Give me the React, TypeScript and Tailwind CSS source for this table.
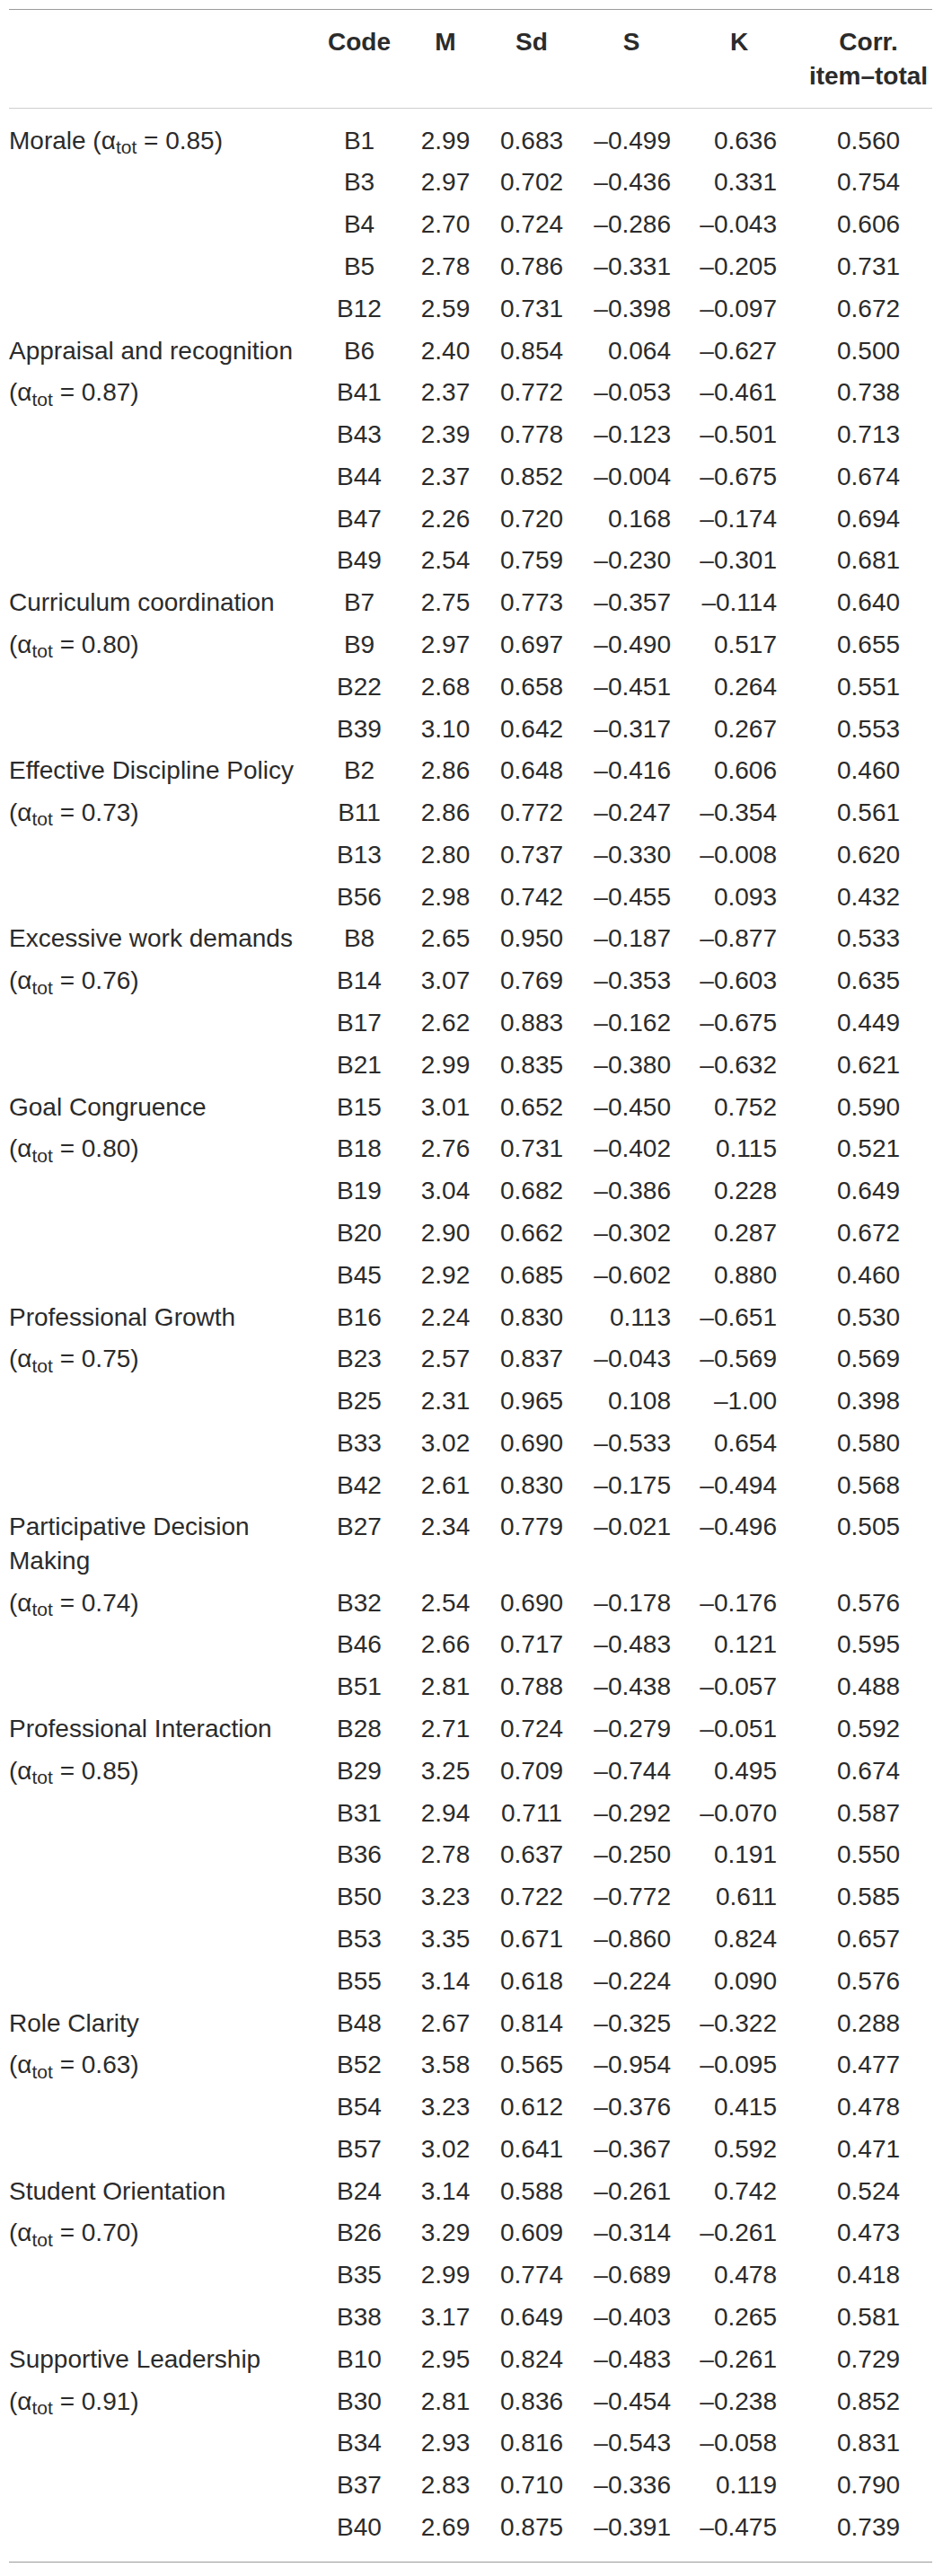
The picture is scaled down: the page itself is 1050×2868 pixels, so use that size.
import React from "react";

type Row = [React.ReactNode, string, string, string, string, string, string, boolean?];

const A = (v: string) => (
  <>
    (α<sub>tot</sub> = {v})
  </>
);

const rows: Row[] = [
  [<>Morale (α<sub>tot</sub> = 0.85)</>, "B1", "2.99", "0.683", "–0.499", "0.636", "0.560"],
  ["", "B3", "2.97", "0.702", "–0.436", "0.331", "0.754"],
  ["", "B4", "2.70", "0.724", "–0.286", "–0.043", "0.606"],
  ["", "B5", "2.78", "0.786", "–0.331", "–0.205", "0.731"],
  ["", "B12", "2.59", "0.731", "–0.398", "–0.097", "0.672"],
  ["Appraisal and recognition", "B6", "2.40", "0.854", "0.064", "–0.627", "0.500"],
  [A("0.87"), "B41", "2.37", "0.772", "–0.053", "–0.461", "0.738"],
  ["", "B43", "2.39", "0.778", "–0.123", "–0.501", "0.713"],
  ["", "B44", "2.37", "0.852", "–0.004", "–0.675", "0.674"],
  ["", "B47", "2.26", "0.720", "0.168", "–0.174", "0.694"],
  ["", "B49", "2.54", "0.759", "–0.230", "–0.301", "0.681"],
  ["Curriculum coordination", "B7", "2.75", "0.773", "–0.357", "–0.114", "0.640"],
  [A("0.80"), "B9", "2.97", "0.697", "–0.490", "0.517", "0.655"],
  ["", "B22", "2.68", "0.658", "–0.451", "0.264", "0.551"],
  ["", "B39", "3.10", "0.642", "–0.317", "0.267", "0.553"],
  ["Effective Discipline Policy", "B2", "2.86", "0.648", "–0.416", "0.606", "0.460"],
  [A("0.73"), "B11", "2.86", "0.772", "–0.247", "–0.354", "0.561"],
  ["", "B13", "2.80", "0.737", "–0.330", "–0.008", "0.620"],
  ["", "B56", "2.98", "0.742", "–0.455", "0.093", "0.432"],
  ["Excessive work demands", "B8", "2.65", "0.950", "–0.187", "–0.877", "0.533"],
  [A("0.76"), "B14", "3.07", "0.769", "–0.353", "–0.603", "0.635"],
  ["", "B17", "2.62", "0.883", "–0.162", "–0.675", "0.449"],
  ["", "B21", "2.99", "0.835", "–0.380", "–0.632", "0.621"],
  ["Goal Congruence", "B15", "3.01", "0.652", "–0.450", "0.752", "0.590"],
  [A("0.80"), "B18", "2.76", "0.731", "–0.402", "0.115", "0.521"],
  ["", "B19", "3.04", "0.682", "–0.386", "0.228", "0.649"],
  ["", "B20", "2.90", "0.662", "–0.302", "0.287", "0.672"],
  ["", "B45", "2.92", "0.685", "–0.602", "0.880", "0.460"],
  ["Professional Growth", "B16", "2.24", "0.830", "0.113", "–0.651", "0.530"],
  [A("0.75"), "B23", "2.57", "0.837", "–0.043", "–0.569", "0.569"],
  ["", "B25", "2.31", "0.965", "0.108", "–1.00", "0.398"],
  ["", "B33", "3.02", "0.690", "–0.533", "0.654", "0.580"],
  ["", "B42", "2.61", "0.830", "–0.175", "–0.494", "0.568"],
  ["Participative Decision Making", "B27", "2.34", "0.779", "–0.021", "–0.496", "0.505"],
  [A("0.74"), "B32", "2.54", "0.690", "–0.178", "–0.176", "0.576"],
  ["", "B46", "2.66", "0.717", "–0.483", "0.121", "0.595"],
  ["", "B51", "2.81", "0.788", "–0.438", "–0.057", "0.488"],
  ["Professional Interaction", "B28", "2.71", "0.724", "–0.279", "–0.051", "0.592"],
  [A("0.85"), "B29", "3.25", "0.709", "–0.744", "0.495", "0.674"],
  ["", "B31", "2.94", "0.711", "–0.292", "–0.070", "0.587"],
  ["", "B36", "2.78", "0.637", "–0.250", "0.191", "0.550"],
  ["", "B50", "3.23", "0.722", "–0.772", "0.611", "0.585"],
  ["", "B53", "3.35", "0.671", "–0.860", "0.824", "0.657"],
  ["", "B55", "3.14", "0.618", "–0.224", "0.090", "0.576"],
  ["Role Clarity", "B48", "2.67", "0.814", "–0.325", "–0.322", "0.288"],
  [A("0.63"), "B52", "3.58", "0.565", "–0.954", "–0.095", "0.477"],
  ["", "B54", "3.23", "0.612", "–0.376", "0.415", "0.478"],
  ["", "B57", "3.02", "0.641", "–0.367", "0.592", "0.471"],
  ["Student Orientation", "B24", "3.14", "0.588", "–0.261", "0.742", "0.524"],
  [A("0.70"), "B26", "3.29", "0.609", "–0.314", "–0.261", "0.473"],
  ["", "B35", "2.99", "0.774", "–0.689", "0.478", "0.418"],
  ["", "B38", "3.17", "0.649", "–0.403", "0.265", "0.581"],
  ["Supportive Leadership", "B10", "2.95", "0.824", "–0.483", "–0.261", "0.729"],
  [A("0.91"), "B30", "2.81", "0.836", "–0.454", "–0.238", "0.852"],
  ["", "B34", "2.93", "0.816", "–0.543", "–0.058", "0.831"],
  ["", "B37", "2.83", "0.710", "–0.336", "0.119", "0.790"],
  ["", "B40", "2.69", "0.875", "–0.391", "–0.475", "0.739"],
];

export default function App() {
  return (
    <div
      className="w-[1050px] bg-white pt-[10px] px-[10px] text-[#2b2b2b]"
      style={{ fontFamily: '"Liberation Sans", Arial, Helvetica, sans-serif' }}
    >
      <table className="w-[1028px] table-fixed border-collapse text-[28px]">
        <colgroup>
          <col className="w-[345px]" />
          <col className="w-[90px]" />
          <col className="w-[102px]" />
          <col className="w-[90px]" />
          <col className="w-[120px]" />
          <col className="w-[118px]" />
          <col className="w-[163px]" />
        </colgroup>
        <thead>
          <tr className="border-t border-b border-t-[#9b9b9b] border-b-[#cfcfcf] align-top font-bold leading-[38px]">
            <th className="p-0 pt-[17px] pb-[16px]"></th>
            <th className="p-0 pt-[17px] pb-[16px] text-center">Code</th>
            <th className="p-0 pt-[17px] pb-[16px] text-center">M</th>
            <th className="p-0 pt-[17px] pb-[16px] text-center">Sd</th>
            <th className="p-0 pt-[17px] pb-[16px] pl-[12px] text-center">S</th>
            <th className="p-0 pt-[17px] pb-[16px] pl-[14px] text-center">K</th>
            <th className="p-0 pt-[17px] pb-[16px] pl-[21px] text-center">
              Corr.
              <br />
              item–total
            </th>
          </tr>
        </thead>
        <tbody className="border-b border-b-[#9b9b9b]">
          <tr>
            <td colSpan={7} className="h-[12.5px] p-0"></td>
          </tr>
          {rows.map((r, i) => (
            <tr key={i} className="align-top leading-[37.5px]">
              <td className="p-0 py-[4.65px] text-left">{r[0]}</td>
              <td className="p-0 py-[4.65px] text-center whitespace-nowrap">{r[1]}</td>
              <td className="p-0 py-[4.65px] text-center whitespace-nowrap">{r[2]}</td>
              <td className="p-0 py-[4.65px] text-center whitespace-nowrap">{r[3]}</td>
              <td className="p-0 py-[4.65px] pr-[10px] text-right whitespace-nowrap">{r[4]}</td>
              <td className="p-0 py-[4.65px] pr-[10px] text-right whitespace-nowrap">{r[5]}</td>
              <td className="p-0 py-[4.65px] pl-[21px] text-center whitespace-nowrap">{r[6]}</td>
            </tr>
          ))}
          <tr>
            <td colSpan={7} className="h-[15.5px] p-0"></td>
          </tr>
        </tbody>
      </table>
    </div>
  );
}
